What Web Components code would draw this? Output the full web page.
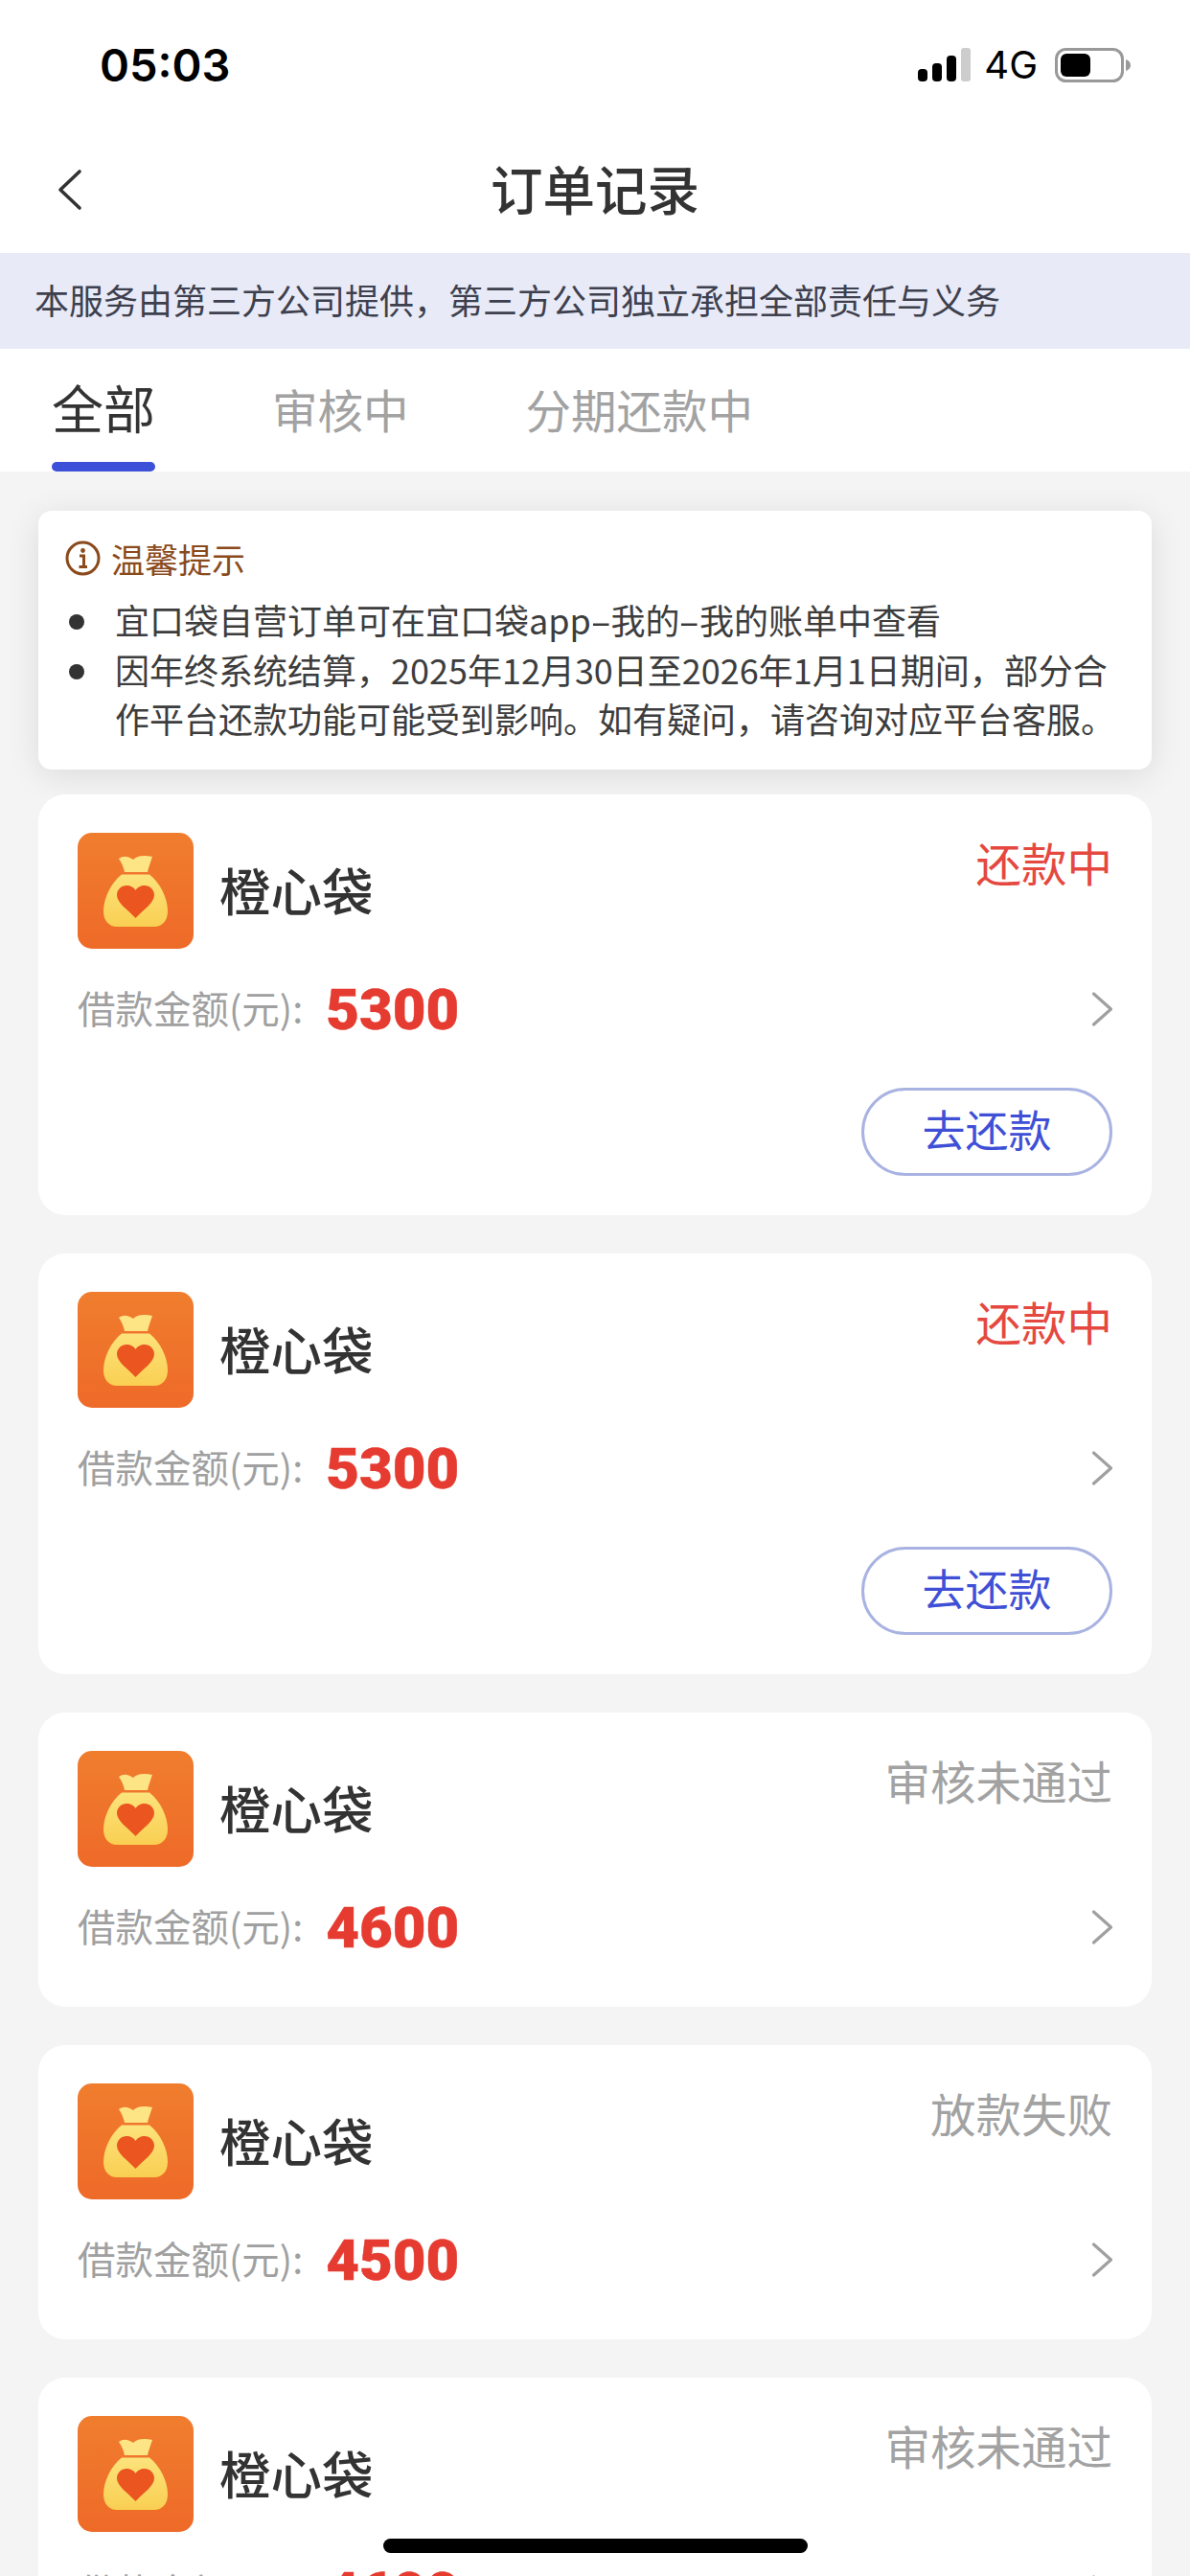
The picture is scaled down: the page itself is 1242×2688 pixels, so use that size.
<!DOCTYPE html>
<html lang="zh-CN">
<head>
<meta charset="utf-8">
<title>订单记录</title>
<style>
  html, body {
    margin: 0;
    width: 1242px;
    height: 2688px;
    overflow: hidden;
    background: #f4f4f5;
    font-family: "Noto Sans CJK SC", "Noto Sans", sans-serif;
  }
  .dash { display: inline-block; margin: 0 4px; transform: scaleX(1.8); }
</style>
</head>
<body>
<order-page>
  <status-bar time="05:03" network="4G"></status-bar>
  <nav-bar>订单记录</nav-bar>
  <notice-banner>本服务由第三方公司提供，第三方公司独立承担全部责任与义务</notice-banner>
  <tab-bar>
    <tab-item active>全部</tab-item>
    <tab-item>审核中</tab-item>
    <tab-item>分期还款中</tab-item>
  </tab-bar>
  <order-list>
    <tip-card heading="温馨提示">
      <tip-line>宜口袋自营订单可在宜口袋app<span class="dash">-</span>我的<span class="dash">-</span>我的账单中查看</tip-line>
      <tip-line>因年终系统结算，2025年12月30日至2026年1月1日期间，部分合作平台还款功能可能受到影响。如有疑问，请咨询对应平台客服。</tip-line>
    </tip-card>
    <order-card status="还款中" tone="red" amount="5300" action="去还款">橙心袋</order-card>
    <order-card status="还款中" tone="red" amount="5300" action="去还款">橙心袋</order-card>
    <order-card status="审核未通过" amount="4600">橙心袋</order-card>
    <order-card status="放款失败" amount="4500">橙心袋</order-card>
    <order-card status="审核未通过" amount="4600">橙心袋</order-card>
  </order-list>
</order-page>
<home-bar></home-bar>

<script>
class OrderPage extends HTMLElement {
  constructor() {
    super();
    this.attachShadow({ mode: "open" });
    this.shadowRoot.innerHTML = `
      <style>
        :host { display: block; width: 1242px; height: 2688px; overflow: hidden; }
      </style>
      <slot></slot>
    `;
  }
}

class StatusBar extends HTMLElement {
  constructor() {
    super();
    this.attachShadow({ mode: "open" });
  }

  connectedCallback() {
    const time = this.getAttribute("time");
    const network = this.getAttribute("network");
    this.shadowRoot.innerHTML = `
      <style>
        :host {
          display: flex;
          align-items: center;
          justify-content: space-between;
          height: 136px;
          padding: 0 62px 0 104px;
          background: #fff;
          color: #000;
          box-sizing: border-box;
        }
        .time { font: 600 47px Inter, "Liberation Sans", sans-serif; line-height: 136px; }
        .right { display: flex; align-items: center; gap: 18px; }
        .net { margin-left: -4px; font: 400 40px Inter, "Liberation Sans", sans-serif; line-height: 40px; }
        svg { display: block; }
      </style>
      <span class="time">${time}</span>
      <div class="right">
        <svg width="56" height="36" viewBox="0 0 56 36">
          <rect x="1" y="22" width="10" height="13" rx="4" fill="#000"/>
          <rect x="16" y="16" width="10" height="19" rx="4" fill="#000"/>
          <rect x="31" y="8" width="10" height="27" rx="4" fill="#000"/>
          <rect x="46" y="0" width="10" height="35" rx="3" fill="#cdcdcd"/>
        </svg>
        <span class="net">${network}</span>
        <svg width="79" height="36" viewBox="0 0 79 36">
          <rect x="1.5" y="1.5" width="69" height="33" rx="10" fill="#fff" stroke="#999" stroke-width="3"/>
          <rect x="6" y="6" width="31" height="24" rx="6" fill="#000"/>
          <path d="M74 12 C77 13 79 15 79 18 C79 21 77 23 74 24Z" fill="#999"/>
        </svg>
      </div>
    `;
  }
}

class NavBar extends HTMLElement {
  constructor() {
    super();
    this.attachShadow({ mode: "open" });
    this.shadowRoot.innerHTML = `
      <style>
        :host {
          display: block;
          position: relative;
          height: 128px;
          background: #fff;
          color: #333;
          font-size: 54.5px;
          font-weight: 500;
          line-height: 120px;
          text-align: center;
        }
        svg { position: absolute; left: 58px; top: 40px; }
      </style>
      <svg width="30" height="44" viewBox="0 0 30 44" fill="none">
        <path d="M25 3 L5 22 L25 41" stroke="#333" stroke-width="3.6" stroke-linecap="round" stroke-linejoin="round"/>
      </svg>
      <slot></slot>
    `;
  }
}

class NoticeBanner extends HTMLElement {
  constructor() {
    super();
    this.attachShadow({ mode: "open" });
    this.shadowRoot.innerHTML = `
      <style>
        :host {
          display: block;
          height: 100px;
          padding-left: 36px;
          background: #e8ebf7;
          color: #3e404e;
          font-size: 36px;
          line-height: 96px;
        }
      </style>
      <slot></slot>
    `;
  }
}

class TabBar extends HTMLElement {
  constructor() {
    super();
    this.attachShadow({ mode: "open" });
    this.shadowRoot.innerHTML = `
      <style>
        :host {
          display: flex;
          gap: 122px;
          align-items: flex-end;
          height: 128px;
          padding-left: 54px;
          background: #fff;
        }
      </style>
      <slot></slot>
    `;
  }
}

class TabItem extends HTMLElement {
  constructor() {
    super();
    this.attachShadow({ mode: "open" });
    this.shadowRoot.innerHTML = `
      <style>
        :host {
          display: block;
          position: relative;
          height: 128px;
          color: #a2a2a2;
          font-size: 47.5px;
          line-height: 126px;
        }
        :host([active]) { color: #333; font-size: 54px; line-height: 122px; }
        :host([active])::after {
          content: "";
          position: absolute;
          left: 0;
          right: 0;
          bottom: 0;
          height: 10px;
          border-radius: 5px;
          background: #3c50d8;
        }
      </style>
      <slot></slot>
    `;
  }
}

class OrderList extends HTMLElement {
  constructor() {
    super();
    this.attachShadow({ mode: "open" });
    this.shadowRoot.innerHTML = `
      <style>
        :host {
          display: flex;
          flex-direction: column;
          gap: 40px;
          padding: 41px 40px 0;
        }
        ::slotted(tip-card) { margin-bottom: -14px; }
      </style>
      <slot></slot>
    `;
  }
}

class TipCard extends HTMLElement {
  constructor() {
    super();
    this.attachShadow({ mode: "open" });
  }

  connectedCallback() {
    const heading = this.getAttribute("heading");
    this.shadowRoot.innerHTML = `
      <style>
        :host {
          display: block;
          flex: none;
          height: 270px;
          box-sizing: border-box;
          padding: 26px 28px 0;
          background: #fff;
          border-radius: 14px;
          box-shadow: 0 6px 34px rgba(0, 0, 0, 0.10);
        }
        .head {
          display: flex;
          align-items: center;
          gap: 11px;
          height: 46px;
          color: #8a4a1c;
          font-size: 35px;
        }
        .list { margin-top: 16px; display: flex; flex-direction: column; }
        svg { display: block; flex: none; }
      </style>
      <div class="head">
        <svg width="37" height="37" viewBox="0 0 37 37" fill="none">
          <circle cx="18.5" cy="18.5" r="16.5" stroke="#8a4a1c" stroke-width="3"/>
          <circle cx="18.5" cy="10.5" r="2.4" fill="#8a4a1c"/>
          <path d="M15 16 H19.5 V27 M14.5 27.5 H23" stroke="#8a4a1c" stroke-width="3"/>
        </svg>
        <span>${heading}</span>
      </div>
      <div class="list"><slot></slot></div>
    `;
  }
}

class TipLine extends HTMLElement {
  constructor() {
    super();
    this.attachShadow({ mode: "open" });
    this.shadowRoot.innerHTML = `
      <style>
        :host {
          display: flex;
          gap: 32px;
          color: #3d3d3d;
          font-size: 36px;
          line-height: 51.5px;
        }
        i {
          flex: none;
          width: 16px;
          height: 16px;
          margin: 20px 0 0 4px;
          border-radius: 50%;
          background: #333;
        }
        div { min-width: 0; flex: 1; }
      </style>
      <i></i>
      <div><slot></slot></div>
    `;
  }
}

// logo drawn once, every card gets its own copy so gradient ids stay in the shadow root
const bagLogo = `
  <svg class="logo" width="121" height="121" viewBox="0 0 121 121">
    <defs>
      <linearGradient id="bg" x1="0" y1="0" x2="0" y2="1">
        <stop offset="0" stop-color="#f07d2e"/>
        <stop offset="1" stop-color="#ee6a28"/>
      </linearGradient>
      <linearGradient id="bag" x1="0" y1="0" x2="0" y2="1">
        <stop offset="0" stop-color="#fce37c"/>
        <stop offset="1" stop-color="#f9cf52"/>
      </linearGradient>
    </defs>
    <rect width="121" height="121" rx="15" fill="url(#bg)"/>
    <path d="M43 27 C48 23 54 25 58 28 C62 24 68 23 78 25 C76 31 74 36 73 41 H49 C48 36 46 31 43 27Z" fill="#fde485"/>
    <path d="M46 43.5 H75 C86 52 94 68 94 82 C94 92 88 98 80 98 H41 C33 98 27 92 27 82 C27 68 35 52 46 43.5Z" fill="url(#bag)"/>
    <path d="M60.5 89 C52 80 41 73 41 65 C41 59 46 55 51 55 C55 55 59 57 60.5 60 C62 57 66 55 70 55 C75 55 80 59 80 65 C80 73 69 80 60.5 89Z" fill="#ea5520"/>
  </svg>
`;

class OrderCard extends HTMLElement {
  constructor() {
    super();
    this.attachShadow({ mode: "open" });
  }

  connectedCallback() {
    const status = this.getAttribute("status");
    const tone = this.getAttribute("tone");
    const amount = this.getAttribute("amount");
    const action = this.getAttribute("action");
    this.shadowRoot.innerHTML = `
      <style>
        :host {
          display: block;
          flex: none;
          box-sizing: border-box;
          padding: 40px 41px ${action ? "41px" : "52px"};
          background: #fff;
          border-radius: 28px;
        }
        .head { display: flex; align-items: flex-start; }
        .logo { display: block; flex: none; }
        .name {
          margin-left: 27px;
          height: 121px;
          color: #333;
          font-size: 53.5px;
          font-weight: 500;
          line-height: 118px;
        }
        .status {
          margin-left: auto;
          color: ${tone === "red" ? "#e5483f" : "#a2a2a2"};
          font-size: 47.5px;
          line-height: 62px;
        }
        .row { display: flex; align-items: center; height: 62px; margin-top: 32px; }
        .label { margin-top: -6px; color: #a0a0a0; font-size: 39.5px; }
        .amount {
          margin-left: 24px;
          color: #e53b30;
          font: 900 60px Roboto, "Liberation Sans", sans-serif;
          -webkit-text-stroke: 0.4px #e53b30;
        }
        .row svg { margin-left: auto; display: block; }
        .foot { display: flex; justify-content: flex-end; margin-top: 51px; }
        .btn {
          box-sizing: border-box;
          width: 262px;
          height: 92px;
          border: 3px solid #a9b3e2;
          border-radius: 46px;
          color: #3f50d6;
          font-size: 45px;
          line-height: 80px;
          text-align: center;
        }
      </style>
      <div class="head">
        ${bagLogo}
        <div class="name"><slot></slot></div>
        <div class="status">${status}</div>
      </div>
      <div class="row">
        <span class="label">借款金额(元):</span>
        <span class="amount">${amount}</span>
        <svg width="21" height="36" viewBox="0 0 21 36" fill="none">
          <path d="M1.5 2 L19.5 18 L1.5 34" stroke="#a0a0a0" stroke-width="3.2" stroke-linecap="round" stroke-linejoin="round"/>
        </svg>
      </div>
      ${action ? `<div class="foot"><div class="btn">${action}</div></div>` : ""}
    `;
  }
}

class HomeBar extends HTMLElement {
  constructor() {
    super();
    this.attachShadow({ mode: "open" });
    this.shadowRoot.innerHTML = `
      <style>
        :host {
          position: fixed;
          left: 400px;
          top: 2649px;
          width: 443px;
          height: 15px;
          border-radius: 8px;
          background: #000;
        }
      </style>
    `;
  }
}

customElements.define("order-page", OrderPage);
customElements.define("status-bar", StatusBar);
customElements.define("nav-bar", NavBar);
customElements.define("notice-banner", NoticeBanner);
customElements.define("tab-bar", TabBar);
customElements.define("tab-item", TabItem);
customElements.define("order-list", OrderList);
customElements.define("tip-card", TipCard);
customElements.define("tip-line", TipLine);
customElements.define("order-card", OrderCard);
customElements.define("home-bar", HomeBar);
</script>
</body>
</html>
